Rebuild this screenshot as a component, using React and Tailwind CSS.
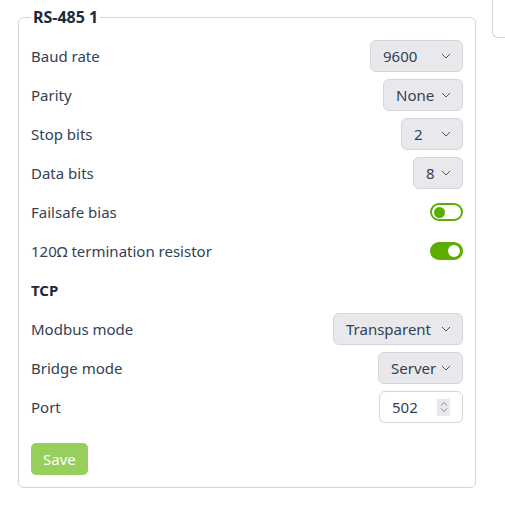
import React from "react";

const Chevron = () => (
  <svg width="10" height="6" viewBox="0 0 10 6" fill="none" className="shrink-0">
    <path d="M1 1L5 5L9 1" stroke="#555" strokeWidth="1" />
  </svg>
);

const Select = ({ value, w }) => (
  <div
    className={`h-[32px] ${w} flex items-center justify-between pl-[12px] pr-[11px] bg-[#e9e9ed] border border-[#d4d4da] rounded-[6px] text-[#334155]`}
  >
    <span>{value}</span>
    <Chevron />
  </div>
);

const Toggle = ({ on }) =>
  on ? (
    <div className="w-[33px] h-[18px] rounded-full bg-[#5cad00] flex items-center justify-end pr-[3px]">
      <div className="w-[12px] h-[12px] rounded-full bg-white" />
    </div>
  ) : (
    <div className="w-[33px] h-[18px] rounded-full bg-white border-2 border-[#5cad00] flex items-center pl-[2px]">
      <div className="w-[11px] h-[11px] rounded-full bg-[#5cad00]" />
    </div>
  );

const Row = ({ label, children }) => (
  <div className="h-[32px] flex items-center justify-between">
    <span>{label}</span>
    {children}
  </div>
);

export default function App() {
  return (
    <div
      className="w-[505px] h-[530px] overflow-hidden bg-white flex items-start gap-[16px] pl-[18px] text-[15px] text-[#334155]"
      style={{ fontFamily: '"Noto Sans", "Open Sans", sans-serif' }}
    >
      <fieldset className="mt-[7px] w-[458px] shrink-0 border border-[#d1d5db] rounded-[6px] px-[12px] pb-[12px]">
        <legend className="px-[2px] font-bold text-[16px] text-[#1e293b] leading-[20px]">RS-485 1</legend>
        <div className="mt-[13px] flex flex-col gap-[7px]">
          <Row label="Baud rate">
            <Select value="9600" w="w-[93px]" />
          </Row>
          <Row label="Parity">
            <Select value="None" w="w-[80px]" />
          </Row>
          <Row label="Stop bits">
            <Select value="2" w="w-[62px]" />
          </Row>
          <Row label="Data bits">
            <Select value="8" w="w-[50px]" />
          </Row>
          <Row label="Failsafe bias">
            <Toggle on={false} />
          </Row>
          <Row label="120Ω termination resistor">
            <Toggle on={true} />
          </Row>
          <div className="h-[32px] flex items-center font-bold text-[#1e293b]">TCP</div>
          <Row label="Modbus mode">
            <Select value="Transparent" w="w-[130px]" />
          </Row>
          <Row label="Bridge mode">
            <Select value="Server" w="w-[85px]" />
          </Row>
          <Row label="Port">
            <div className="h-[32px] w-[84px] flex items-center justify-between pl-[12px] pr-[12px] bg-white border border-[#d4d4da] rounded-[6px]">
              <span>502</span>
              <div className="w-[13px] h-[17px] bg-[#e9e9ed] flex items-center justify-center">
                <svg width="8" height="12" viewBox="0 0 8 12" fill="none">
                  <path d="M1 4.5L4 1.5L7 4.5" stroke="#888" strokeWidth="1" />
                  <path d="M1 7.5L4 10.5L7 7.5" stroke="#888" strokeWidth="1" />
                </svg>
              </div>
            </div>
          </Row>
        </div>
        <button className="mt-[20px] h-[32px] px-[12px] rounded-[5px] bg-[#96cf5b] text-white">Save</button>
      </fieldset>
      <div className="w-[40px] h-[38px] shrink-0 border-l border-b border-[#d1d5db] rounded-bl-[6px]" />
    </div>
  );
}
